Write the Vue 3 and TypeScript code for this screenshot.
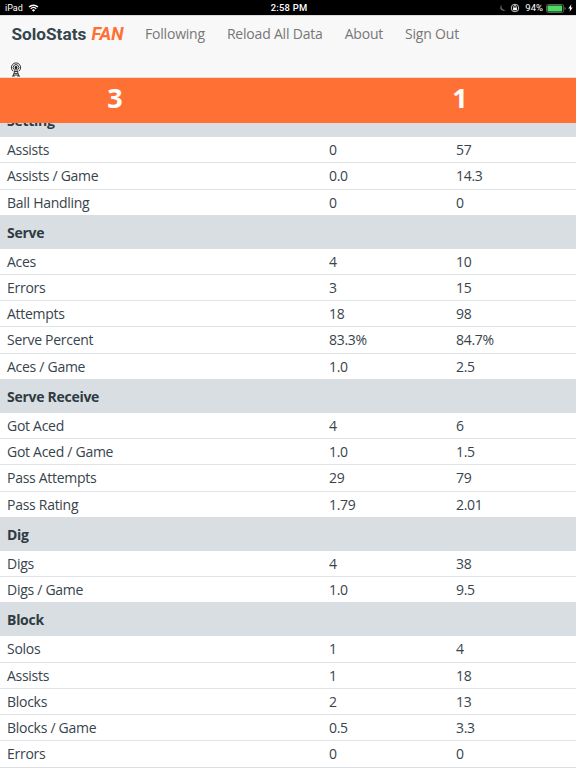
<script setup lang="ts">
interface Stat {
  label: string
  home: string
  away: string
}
interface Section {
  title: string
  stats: Stat[]
}

const stat = (label: string, home: string, away: string): Stat => ({ label, home, away })

const links: string[] = ['Following', 'Reload All Data', 'About', 'Sign Out']

const sections: Section[] = [
  {
    title: 'Setting',
    stats: [stat('Assists', '0', '57'), stat('Assists / Game', '0.0', '14.3'), stat('Ball Handling', '0', '0')],
  },
  {
    title: 'Serve',
    stats: [
      stat('Aces', '4', '10'),
      stat('Errors', '3', '15'),
      stat('Attempts', '18', '98'),
      stat('Serve Percent', '83.3%', '84.7%'),
      stat('Aces / Game', '1.0', '2.5'),
    ],
  },
  {
    title: 'Serve Receive',
    stats: [
      stat('Got Aced', '4', '6'),
      stat('Got Aced / Game', '1.0', '1.5'),
      stat('Pass Attempts', '29', '79'),
      stat('Pass Rating', '1.79', '2.01'),
    ],
  },
  { title: 'Dig', stats: [stat('Digs', '4', '38'), stat('Digs / Game', '1.0', '9.5')] },
  {
    title: 'Block',
    stats: [
      stat('Solos', '1', '4'),
      stat('Assists', '1', '18'),
      stat('Blocks', '2', '13'),
      stat('Blocks / Game', '0.5', '3.3'),
      stat('Errors', '0', '0'),
    ],
  },
]
</script>

<template>
  <div class="screen">
    <div class="status">
      <div class="status-left">
        <span>iPad</span>
        <svg class="wifi" viewBox="0 0 12 9">
          <path d="M1 3.4a7.2 7.2 0 0 1 10 0M2.9 5.3a4.5 4.5 0 0 1 6.2 0" fill="none" stroke="#fff" stroke-width="1.5" />
          <path d="M6 8.8 4.2 6.9a2.6 2.6 0 0 1 3.6 0z" fill="#fff" />
        </svg>
      </div>
      <span class="clock">2:58 PM</span>
      <div class="status-right">
        <svg class="moon" viewBox="0 0 8 8">
          <path d="M2.8.8A3.3 3.3 0 1 0 7 5.8 3.6 3.6 0 0 1 2.8.8z" fill="#666" />
        </svg>
        <svg class="lock" viewBox="0 0 9 9">
          <circle cx="4.5" cy="4.5" r="3.4" fill="none" stroke="#ddd" stroke-width=".8" />
          <rect x="2.8" y="4.1" width="3.4" height="2.4" fill="#fff" />
          <path d="M3.4 4.3V3.3a1.1 1.1 0 0 1 2.2 0v1" fill="none" stroke="#fff" stroke-width=".7" />
        </svg>
        <span class="percent">94%</span>
        <svg class="battery" viewBox="0 0 20 9">
          <rect x=".5" y=".5" width="17.2" height="8" rx="1.8" fill="none" stroke="#777" stroke-width=".8" />
          <rect x="1.5" y="1.5" width="14.7" height="6" rx=".8" fill="#4cd964" />
          <path d="M18.6 3v3q1-.4 1-1.5t-1-1.5z" fill="#777" />
        </svg>
        <svg class="bolt" viewBox="0 0 5 8">
          <path d="M3.4.3.3 4.5h1.8L1.6 7.7l3.1-4.3H2.9z" fill="#fff" />
        </svg>
      </div>
    </div>

    <header class="navbar">
      <nav class="nav">
        <div class="brand">SoloStats <em class="fan">FAN</em></div>
        <a v-for="link in links" :key="link" class="link">{{ link }}</a>
      </nav>
      <svg class="tower" viewBox="0 0 12 15">
        <g fill="none" stroke="#333">
          <path d="M3.4 9.3a4.6 4.6 0 1 1 5.2 0" stroke-width="1" />
          <path d="M4.2 7.6a2.8 2.8 0 1 1 3.6 0" stroke-width="1" />
          <path d="M5.6 6 3.2 14M6.4 6l2.4 8M4.8 9.5h2.4M4.2 11.4h3.6M3.6 13h4.8" stroke-width="1" />
          <path d="M2 14h2.7M7.3 14H10" stroke-width="1.1" />
        </g>
        <circle cx="6" cy="5.4" r="1.4" fill="#222" />
      </svg>
    </header>

    <div class="score">
      <span class="sets home-sets">3</span>
      <span class="sets away-sets">1</span>
    </div>

    <main class="viewport">
      <div class="table">
        <section v-for="section in sections" :key="section.title">
          <h2 class="heading">{{ section.title }}</h2>
          <div v-for="row in section.stats" :key="row.label" class="row">
            <span class="cell">{{ row.label }}</span>
            <span class="cell">{{ row.home }}</span>
            <span class="cell">{{ row.away }}</span>
          </div>
        </section>
      </div>
    </main>
  </div>
</template>

<style>
body {
  background: #fff;
  overflow: hidden;
}
</style>

<style scoped>
.screen {
  display: flex;
  flex-direction: column;
  width: 576px;
  height: 768px;
  overflow: hidden;
  font-family: "Open Sans", "Noto Sans", sans-serif;
  font-size: 14px;
  letter-spacing: -0.28px;
  color: #38444c;
  background: #fff;
}
.status {
  display: grid;
  grid-template-columns: 1fr auto 1fr;
  align-items: center;
  flex: none;
  height: 15px;
  padding: 1px 3px 0 5px;
  box-sizing: border-box;
  background: #000;
  color: #fff;
  font: 9px/14px Roboto, sans-serif;
  letter-spacing: 0;
}
.status-left,
.status-right {
  display: flex;
  align-items: center;
}
.status-left {
  gap: 5px;
}
.status-right {
  justify-content: flex-end;
}
.wifi {
  width: 11px;
  height: 8px;
}
.clock {
  font-weight: 500;
  font-size: 9.4px;
  letter-spacing: 0.25px;
}
.moon {
  width: 8px;
  height: 8px;
  margin-right: 3px;
}
.lock {
  width: 10px;
  height: 10px;
  margin-right: 5px;
}
.percent {
  font-size: 9.5px;
  margin-right: 3px;
}
.battery {
  width: 20px;
  height: 9px;
  margin-right: 2px;
}
.bolt {
  width: 5px;
  height: 8px;
}
.navbar {
  flex: none;
  height: 62.5px;
  box-sizing: border-box;
  padding: 6px 0 0 11.5px;
  border-top: 1px solid #ddd;
  border-bottom: 1px solid #e4dedb;
  background: #f8f8f8;
}
.nav {
  display: flex;
  align-items: center;
  height: 23px;
  color: #777;
  white-space: nowrap;
  letter-spacing: -0.2px;
}
.brand {
  width: 133.5px;
  font: bold 17.2px/23px Roboto, sans-serif;
  letter-spacing: 0;
  color: #36444d;
}
.fan {
  margin-left: 1px;
  font-size: 18px;
  color: #ff7034;
}
.link {
  margin-right: 22px;
}
.tower {
  display: block;
  width: 12px;
  height: 15px;
  margin: 17px 0 0 -1.5px;
}
.score {
  display: grid;
  grid-template-columns: 230px 1fr;
  flex: none;
  height: 45.5px;
  background: #ff7034;
  color: #fff;
  font-size: 27px;
  font-weight: 700;
  line-height: 39px;
  letter-spacing: 0;
  text-align: center;
}
.away-sets {
  width: 460px;
}
.viewport {
  flex: 1;
  min-height: 0;
  overflow: hidden;
}
.table {
  margin-top: -18.9px;
}
.heading {
  margin: 0;
  height: 32.95px;
  padding-left: 7px;
  background: #d9dee2;
  color: #2e3b43;
  font-size: 14px;
  font-weight: 700;
  line-height: 33px;
}
.row {
  display: grid;
  grid-template-columns: 322px 127px 127px;
  height: 26.25px;
  box-sizing: border-box;
  border-bottom: 1px solid #dfe3e6;
  line-height: 26px;
}
.row:last-child {
  border-bottom-color: #d9dee2;
}
.cell {
  padding-left: 7px;
}
</style>
